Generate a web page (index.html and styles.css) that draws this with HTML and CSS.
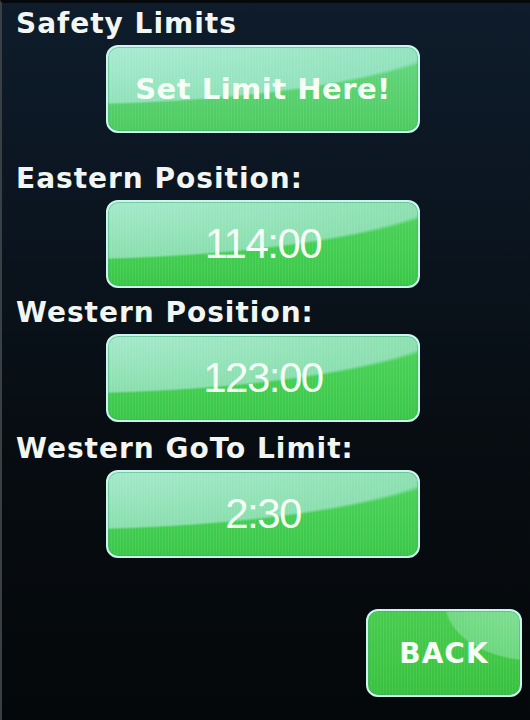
FILE: index.html
```html
<!DOCTYPE html>
<html>
<head>
<meta charset="utf-8">
<link rel="stylesheet" href="styles.css">
</head>
<body>
<main class="screen">
  <h2 class="label label-first">Safety Limits</h2>
  <button class="btn btn-mint btn-text">Set Limit Here!</button>
  <h2 class="label label-east">Eastern Position:</h2>
  <button class="btn btn-value">114:00</button>
  <h2 class="label label-west">Western Position:</h2>
  <button class="btn btn-value">123:00</button>
  <h2 class="label label-goto">Western GoTo Limit:</h2>
  <button class="btn btn-value">2:30</button>
  <div class="footer">
    <button class="btn btn-back btn-text">BACK</button>
  </div>
</main>
</body>
</html>
```
FILE: styles.css
```css
html, body {
  margin: 0;
  padding: 0;
  height: 100%;
}
body {
  background: linear-gradient(180deg, #0e1c2b 0%, #0b1520 30%, #070d12 60%, #05080a 100%);
  overflow: hidden;
}
.screen {
  display: flex;
  flex-direction: column;
  align-items: flex-start;
  padding: 0 0 0 14px;
  height: 720px;
  box-sizing: border-box;
  border-left: 2px solid #3a3f44;
  border-top: 3px solid #06090c;
}
.label {
  margin: 0;
  font-family: "DejaVu Sans", sans-serif;
  font-weight: bold;
  font-size: 28px;
  line-height: 30px;
  letter-spacing: 1px;
  color: #f2f6f2;
}
.label-first { margin-top: 6px; }
.label-east { margin-top: 31px; }
.label-west { margin-top: 10px; }
.label-goto { margin-top: 12px; }

.btn {
  margin: 6px 0 0 90px;
  width: 314px;
  height: 88px;
  border: 2px solid #cdf5f0;
  border-radius: 12px;
  box-sizing: border-box;
  padding: 0;
  color: #f6fff6;
  background:
    repeating-linear-gradient(90deg, rgba(255,255,255,0.08) 0 1px, rgba(0,0,0,0) 1px 3px),
    radial-gradient(ellipse 140% 100% at -20% -30%, rgba(185,240,228,0.92) 0%, rgba(150,226,190,0.85) 97%, rgba(0,0,0,0) 100%),
    linear-gradient(180deg, #4cd25c 0%, #42cd50 60%, #3ac748 100%);
  box-shadow: inset 0 0 0 1px rgba(60,170,110,0.45);
  display: flex;
  align-items: center;
  justify-content: center;
  cursor: pointer;
}
.btn-mint {
  background:
    repeating-linear-gradient(90deg, rgba(255,255,255,0.08) 0 1px, rgba(0,0,0,0) 1px 3px),
    radial-gradient(ellipse 140% 100% at -20% -30%, rgba(185,240,225,0.95) 0%, rgba(150,228,195,0.9) 97%, rgba(0,0,0,0) 100%),
    linear-gradient(180deg, #66d682 0%, #56d06c 60%, #4ccb60 100%);
}
.btn-text {
  font-family: "DejaVu Sans", sans-serif;
  font-weight: bold;
  font-size: 29px;
  letter-spacing: 0.5px;
}
.btn-value {
  font-family: "Liberation Sans", Arial, sans-serif;
  font-weight: normal;
  font-size: 42px;
  letter-spacing: -1.5px;
}
.footer {
  align-self: stretch;
  display: flex;
  justify-content: flex-end;
  padding-right: 8px;
  margin-top: 51px;
}
.btn-back {
  margin: 0;
  width: 156px;
  height: 88px;
  font-size: 28px;
  letter-spacing: 1px;
  background:
    repeating-linear-gradient(90deg, rgba(255,255,255,0.08) 0 1px, rgba(0,0,0,0) 1px 3px),
    radial-gradient(ellipse 60% 70% at 110% -10%, rgba(170,236,200,0.6) 0%, rgba(150,230,180,0.5) 97%, rgba(0,0,0,0) 100%),
    linear-gradient(180deg, #48cc4e 0%, #3ec645 60%, #38c03f 100%);
}
```
